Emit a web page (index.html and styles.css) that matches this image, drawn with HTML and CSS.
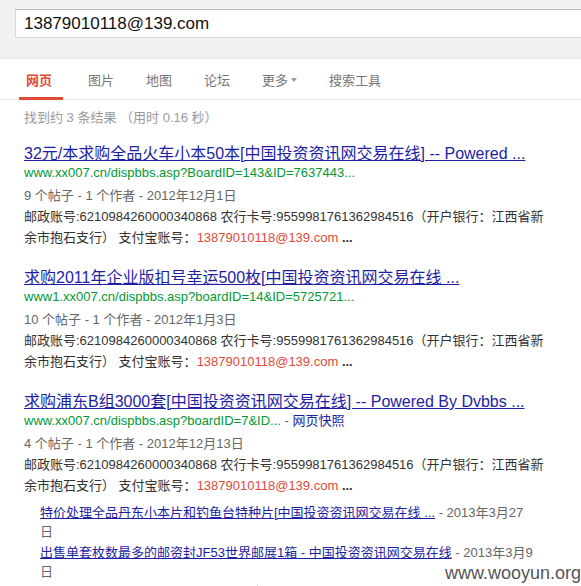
FILE: index.html
```html
<!DOCTYPE html>
<html lang="zh-CN">
<head>
<meta charset="utf-8">
<title>13879010118@139.com</title>
<link rel="stylesheet" href="styles.css">
</head>
<body>
<header class="head">
  <div class="search">13879010118@139.com</div>
</header>
<nav class="tabs">
  <span class="tab active">网页</span>
  <span class="tab">图片</span>
  <span class="tab">地图</span>
  <span class="tab">论坛</span>
  <span class="tab">更多<i class="caret"></i></span>
  <span class="tab">搜索工具</span>
</nav>
<main class="results">
  <div class="stats">找到约 3 条结果 （用时 0.16 秒）</div>

  <div class="result">
    <a class="title" href="#">32元/本求购全品火车小本50本[中国投资资讯网交易在线] -- Powered ...</a>
    <div class="url">www.xx007.cn/dispbbs.asp?BoardID=143&amp;ID=7637443...</div>
    <div class="meta">9 个帖子 - 1 个作者 - 2012年12月1日</div>
    <div class="snippet">
      <div class="line">邮政账号:6210984260000340868 农行卡号:9559981761362984516（开户银行：江西省新</div>
      <div class="line">余市抱石支行） 支付宝账号：<em class="hit">13879010118@139.com</em> <b>...</b></div>
    </div>
  </div>

  <div class="result">
    <a class="title" href="#">求购2011年企业版扣号幸运500枚[中国投资资讯网交易在线 ...</a>
    <div class="url">www1.xx007.cn/dispbbs.asp?boardID=14&amp;ID=5725721...</div>
    <div class="meta">10 个帖子 - 1 个作者 - 2012年1月3日</div>
    <div class="snippet">
      <div class="line">邮政账号:6210984260000340868 农行卡号:9559981761362984516（开户银行：江西省新</div>
      <div class="line">余市抱石支行） 支付宝账号：<em class="hit">13879010118@139.com</em> <b>...</b></div>
    </div>
  </div>

  <div class="result">
    <a class="title" href="#">求购浦东B组3000套[中国投资资讯网交易在线] -- Powered By Dvbbs ...</a>
    <div class="url">www.xx007.cn/dispbbs.asp?boardID=7&amp;ID... <span class="sep">-</span> <a class="cache" href="#">网页快照</a></div>
    <div class="meta">4 个帖子 - 1 个作者 - 2012年12月13日</div>
    <div class="snippet">
      <div class="line">邮政账号:6210984260000340868 农行卡号:9559981761362984516（开户银行：江西省新</div>
      <div class="line">余市抱石支行） 支付宝账号：<em class="hit">13879010118@139.com</em> <b>...</b></div>
    </div>
  </div>

  <ul class="subs">
    <li class="sub"><a href="#">特价处理全品丹东小本片和钓鱼台特种片[中国投资资讯网交易在线 ...</a><span class="date"> - 2013年3月27<br>日</span></li>
    <li class="sub"><a href="#">出售单套枚数最多的邮资封JF53世界邮展1箱 - 中国投资资讯网交易在线</a><span class="date"> - 2013年3月9<br>日</span></li>
    <li class="sub"><a href="#">出售全品8000张小型张邮票一批[中国投资资讯网交易在线 ...</a><span class="date"> - 2013年3月5<br>日</span></li>
  </ul>
</main>
<div class="watermark">www.wooyun.org</div>
</body>
</html>
```

FILE: styles.css
```css
html, body {
  margin: 0;
  padding: 0;
  overflow: hidden;
}
body {
  position: relative;
  background: #fff;
  font-family: Arial, "Liberation Sans", "Noto Sans CJK SC", sans-serif;
  font-size: 13px;
  color: #333;
}
.head {
  height: 59px;
  background: #f1f1f1;
  border-bottom: 1px solid #e5e5e5;
  padding: 9px 0 0 15px;
  box-sizing: border-box;
  overflow: hidden;
}
.search {
  height: 29px;
  width: 620px;
  box-sizing: border-box;
  background: #fff;
  border: 1px solid #d9d9d9;
  border-top-color: #c0c0c0;
  padding-left: 8px;
  font-size: 17px;
  line-height: 27px;
  color: #111;
}
.tabs {
  display: flex;
  height: 40px;
  border-bottom: 1px solid #ebebeb;
  padding-left: 26px;
  gap: 32px;
}
.tab {
  position: relative;
  display: flex;
  align-items: center;
  color: #777;
  font-size: 13px;
}
.tab.active {
  color: #dd4b39;
  font-weight: bold;
  min-width: 30px;
}
.tab.active::after {
  content: "";
  position: absolute;
  left: -7px;
  width: 44px;
  bottom: -1px;
  height: 3px;
  background: #dd4b39;
}
.caret {
  display: inline-block;
  margin-left: 3px;
  margin-top: 2px;
  border-left: 3.5px solid transparent;
  border-right: 3.5px solid transparent;
  border-top: 4px solid #999;
}
.results {
  padding: 8px 0 0 24px;
}
.stats {
  color: #999;
  line-height: 20px;
  margin-bottom: 16px;
}
.result {
  margin-bottom: 20px;
}
.result + .result {
  margin-top: 0;
}
.title {
  display: block;
  font-size: 16px;
  line-height: 20px;
  color: #1e1ea4;
  text-decoration: underline;
  white-space: nowrap;
}
.url {
  color: #009933;
  line-height: 18px;
  white-space: nowrap;
}
.url .sep {
  color: #666;
}
.cache {
  color: #1e1ea4;
  text-decoration: none;
}
.meta {
  color: #666;
  line-height: 20px;
  margin-top: 4px;
}
.snippet .line {
  line-height: 21px;
  white-space: nowrap;
  color: #333;
}
.hit {
  font-style: normal;
  color: #dd4b39;
}
.subs {
  list-style: none;
  margin: -13px 0 0 16px;
  padding: 0;
}
.sub {
  line-height: 19px;
  margin-bottom: 2px;
  white-space: nowrap;
}
.sub a {
  color: #1e1ea4;
  text-decoration: underline;
}
.sub .date {
  color: #666;
}
.watermark {
  position: absolute;
  top: 563px;
  right: 0;
  font-size: 18px;
  color: #555;
  line-height: 21px;
}
```
